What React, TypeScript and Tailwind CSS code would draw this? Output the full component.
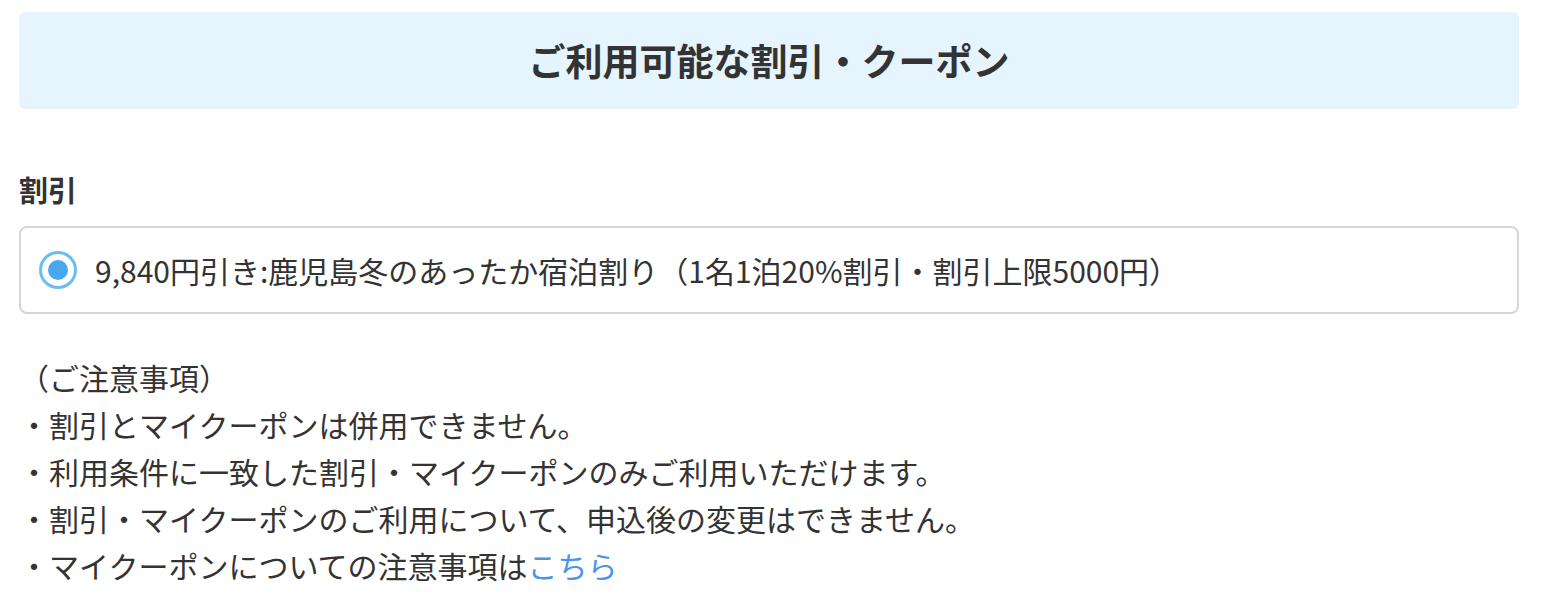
export default function App() {
  const notes = [
    '・割引とマイクーポンは併用できません。',
    '・利用条件に一致した割引・マイクーポンのみご利用いただけます。',
    '・割引・マイクーポンのご利用について、申込後の変更はできません。',
  ]

  return (
    <div
      className="min-h-[606px] bg-white pt-[12px] pl-[19px] text-[#333333]"
      style={{ fontFamily: '"Noto Sans CJK JP", "Noto Sans", sans-serif' }}
    >
      <div className="w-[1500px]">
        <div className="flex h-[97px] items-center justify-center rounded-[6px] bg-[#e6f4fd]">
          <h2 className="text-[37px] font-bold leading-none text-[#333333]">ご利用可能な割引・クーポン</h2>
        </div>

        <h3 className="mt-[58px] text-[29px] font-bold leading-[44px]">割引</h3>

        <label className="mt-[15px] flex h-[88px] items-center gap-[18px] rounded-[8px] border-2 border-[#d6d6d6] pl-[18px]">
          <span className="flex h-[38px] w-[38px] shrink-0 items-center justify-center rounded-full border-[3px] border-[#6cbcf3] bg-white">
            <span className="h-[20px] w-[20px] rounded-full bg-[#48a7ef]" />
          </span>
          <span className="text-[30px] leading-none">
            9,840円引き:鹿児島冬のあったか宿泊割り（1名1泊20%割引・割引上限5000円）
          </span>
        </label>

        <div className="mt-[40px] text-[30px] leading-[47px]">
          <p>（ご注意事項）</p>
          {notes.map((n) => (
            <p key={n}>{n}</p>
          ))}
          <p>
            ・マイクーポンについての注意事項は
            <a href="#" className="text-[#4a94ea]">
              こちら
            </a>
          </p>
        </div>
      </div>
    </div>
  )
}
